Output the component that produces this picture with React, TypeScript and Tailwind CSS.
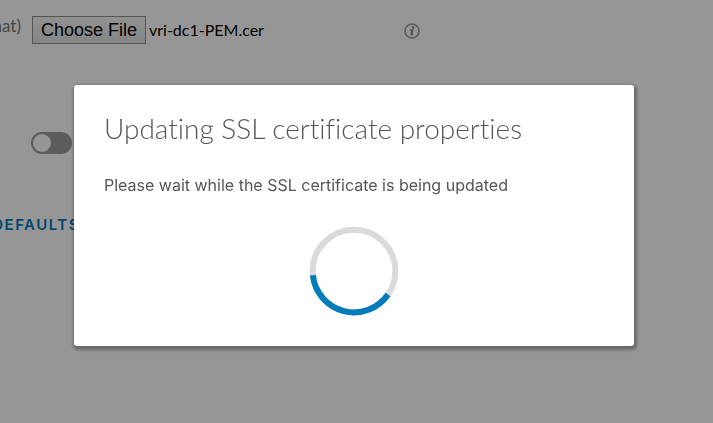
import { useRef, useState } from 'react';

function InfoIcon() {
  return (
    <svg viewBox="0 0 16 16" className="w-4 h-4" aria-hidden="true">
      <circle cx="8" cy="8" r="7" fill="none" stroke="#999" strokeWidth="1.6" />
      <circle cx="9" cy="4.4" r="1.2" fill="#858585" />
      <path d="M6 6.9h2.7L7.6 11.6h1.5M8.2 7L7 11.8" fill="none" stroke="#858585" strokeWidth="1.5" />
    </svg>
  );
}

function Spinner() {
  return (
    <svg viewBox="0 0 90 90" className="w-[90px] h-[90px]" role="img" aria-label="Loading">
      <circle cx="45" cy="45" r="41.3" fill="none" stroke="#dadada" strokeWidth="6" />
      <path d="M3.9 49.3A41.3 41.3 0 0 0 79 68.5" fill="none" stroke="#007cbb" strokeWidth="6" />
    </svg>
  );
}

export default function App() {
  const fileRef = useRef<HTMLInputElement>(null);
  const [fileName, setFileName] = useState('vri-dc1-PEM.cer');
  const [enabled, setEnabled] = useState(false);

  return (
    <div className="min-h-screen overflow-hidden bg-[#fafafa] font-['Lato','Liberation_Sans',sans-serif] [font-variant-ligatures:none]">
      <div className="flex items-start pt-4">
        <label htmlFor="cert" className="flex w-[21px] shrink-0 justify-end whitespace-nowrap text-[17px] leading-5 text-[#737373]">
          (PEM format)
        </label>
        <input
          id="cert"
          ref={fileRef}
          type="file"
          className="hidden"
          onChange={(e) => setFileName(e.target.files?.[0]?.name ?? fileName)}
        />
        <div className="ml-[11px] flex w-[372px] shrink-0 items-center">
          <button
            type="button"
            onClick={() => fileRef.current?.click()}
            className="h-7 w-[114px] border border-[#8c8c8c] bg-linear-to-b from-[#f3f3f3] to-[#dedede] font-['Liberation_Sans',sans-serif] text-lg leading-6 text-black"
          >
            Choose File
          </button>
          <span className="ml-[3px] text-base text-black">{fileName}</span>
        </div>
        <button type="button" aria-label="More information" className="mt-[7px]">
          <InfoIcon />
        </button>
      </div>

      <label className="mt-[88px] ml-[31px] flex h-[22px] w-[41px] items-center rounded-full bg-[#9a9a9a] p-[2px]">
        <input
          type="checkbox"
          role="switch"
          aria-label="Enabled"
          checked={enabled}
          onChange={(e) => setEnabled(e.target.checked)}
          className="peer sr-only"
        />
        <span className="h-[18px] w-[18px] rounded-full bg-[#fafafa] peer-checked:ml-auto" />
      </label>

      <div className="mt-[61px] flex w-[80px] justify-end">
        <a
          href="#defaults"
          className="whitespace-nowrap font-['Inter','Liberation_Sans',sans-serif] text-[15px] leading-5 font-semibold tracking-widest text-[#0079b8]"
        >
          RESTORE DEFAULTS
        </a>
      </div>

      <div className="fixed inset-0 bg-black/40 pt-[85px] pr-[79px] pl-[74px]">
        <div
          role="dialog"
          aria-modal="true"
          aria-labelledby="dialog-title"
          className="rounded-[3px] bg-white px-[30px] pt-[23px] pb-[30px] shadow-[1px_2px_3px_2px_rgba(0,0,0,0.3)]"
        >
          <h1 id="dialog-title" className="text-[28px] leading-10 font-light whitespace-nowrap text-[#565656]">
            Updating SSL certificate properties
          </h1>
          <p className="mt-[25px] font-['Inter','Liberation_Sans',sans-serif] text-base leading-6 text-[#565656]">
            Please wait while the SSL certificate is being updated
          </p>
          <div className="mt-[29px] flex justify-center">
            <Spinner />
          </div>
        </div>
      </div>
    </div>
  );
}
